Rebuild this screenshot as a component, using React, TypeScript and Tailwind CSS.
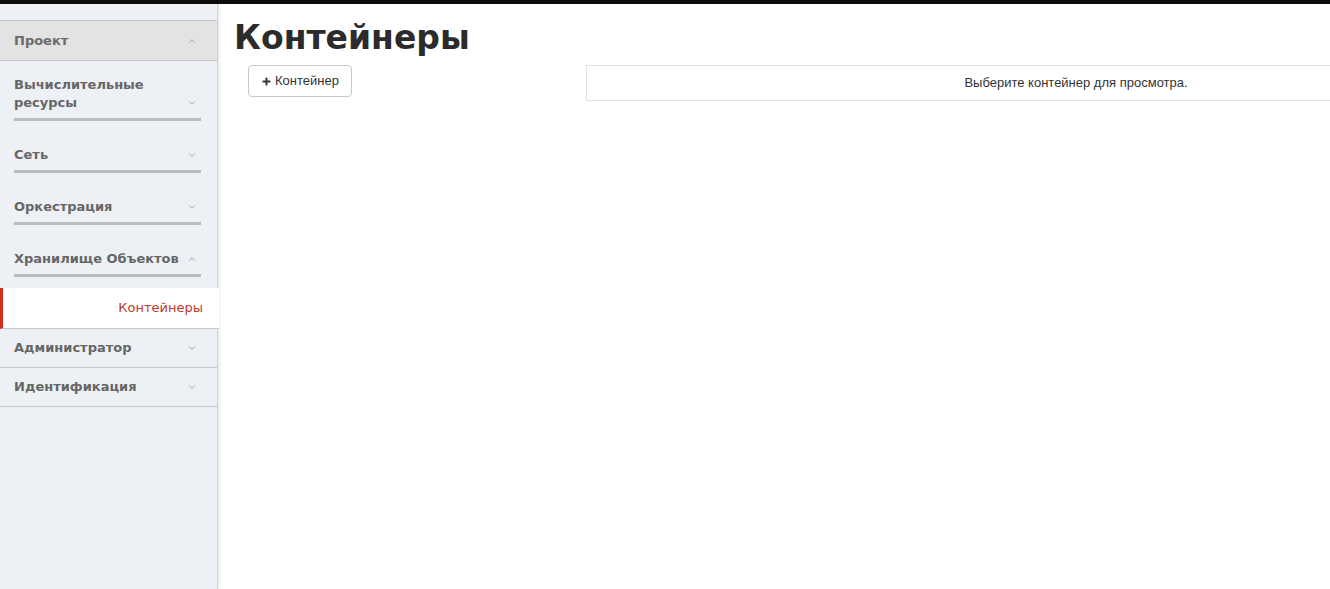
import { ChevronDown, ChevronUp, Plus } from 'lucide-react';

const groups = [
  { label: 'Вычислительные ресурсы', open: false, pt: 'pt-[15px]' },
  { label: 'Сеть', open: false, pt: 'pt-[25px]' },
  { label: 'Оркестрация', open: false, pt: 'pt-[25px]' },
  { label: 'Хранилище Объектов', open: true, pt: 'pt-[25px]' },
];

const panels = ['Администратор', 'Идентификация'];

function Chevron({ up }: { up?: boolean }) {
  const Icon = up ? ChevronUp : ChevronDown;
  return <Icon className="w-[10px] h-[10px] text-[#7a7a7a] flex-shrink-0" strokeWidth={1.6} />;
}

export default function App() {
  return (
    <div className="h-[589px] overflow-hidden bg-white font-['DejaVu_Sans',sans-serif]">
      {/* верхняя полоса */}
      <div className="h-[4px] bg-[#0b0b0b]" />

      <div className="flex h-[585px]">
        {/* боковое меню */}
        <aside className="w-[218px] flex-shrink-0 bg-[#edf1f5] border-r border-[#cfd3d7] shadow-[1px_0_3px_rgba(0,0,0,0.12)]">
          <div className="h-[17px] border-b border-[#c4c8cc]" />

          <div className="h-[40px] bg-[#e3e3e3] border-b border-[#c4c8cc] flex items-center justify-between pl-[14px] pr-[20px]">
            <span className="text-[13px] font-bold text-[#6b6b6b]">Проект</span>
            <Chevron up />
          </div>

          {groups.map((g) => (
            <div key={g.label} className={`${g.pt} pl-[14px] pr-[16px]`}>
              <div className="flex items-end justify-between pr-[4px]">
                <span className="text-[13px] leading-[18px] font-bold text-[#666] max-w-[172px]">{g.label}</span>
                <span className="pb-[4px]">
                  <Chevron up={g.open} />
                </span>
              </div>
              <div className="mt-[6px] h-[3px] bg-[#bcbcbc]" />
            </div>
          ))}

          <div className="mt-[11px] h-[41px] w-[219px] bg-white border-l-[3px] border-[#d0301c] border-b border-b-[#c4c8cc] flex items-center justify-end pr-[16px]">
            <span className="text-[13px] text-[#c0392b]">Контейнеры</span>
          </div>

          {panels.map((p) => (
            <div
              key={p}
              className="h-[39px] border-b border-[#c4c8cc] flex items-center justify-between pl-[14px] pr-[20px]"
            >
              <span className="text-[13px] font-bold text-[#666]">{p}</span>
              <Chevron />
            </div>
          ))}
        </aside>

        {/* основная часть */}
        <main className="flex-1 min-w-0 overflow-hidden pl-[16px]">
          <h1 className="mt-[14px] text-[33px] leading-[40px] font-bold text-[#2b2b2b]">Контейнеры</h1>

          <div className="flex mt-[7px]">
            <div className="w-[352px] flex-shrink-0 pl-[14px]">
              <button className="h-[32px] px-[12px] rounded-[4px] border border-[#c8c8c8] bg-white flex items-center gap-[3px] font-['Liberation_Sans',Arial,sans-serif] text-[13px] text-[#333]">
                <Plus className="w-[11px] h-[11px]" strokeWidth={4} />
                Контейнер
              </button>
            </div>
            <div className="w-[980px] flex-shrink-0 h-[36px] border border-[#dde4e8] flex items-center justify-center font-['Liberation_Sans',Arial,sans-serif] text-[13px] text-[#333]">
              Выберите контейнер для просмотра.
            </div>
          </div>
        </main>
      </div>
    </div>
  );
}
